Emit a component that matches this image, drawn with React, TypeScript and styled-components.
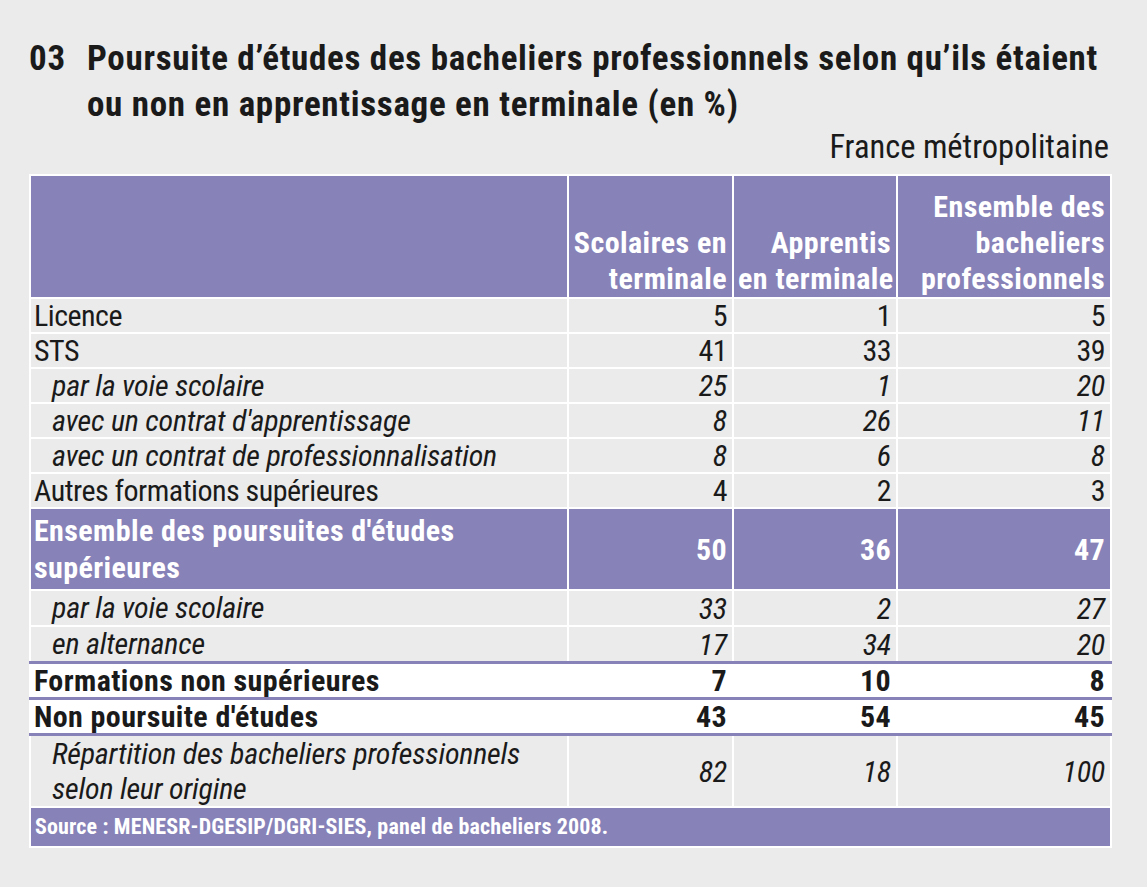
import React from "react";
import styled, { createGlobalStyle } from "styled-components";

const Global = createGlobalStyle`
  html, body { margin: 0; padding: 0; background: #ebebeb; }
  body { font-family: "Roboto Condensed", "Liberation Sans", sans-serif; color: #1a1a1a; }
`;

const PURPLE = "#8782b8";
const GREY = "#ebebeb";

const Page = styled.div`
  width: 1147px;
  height: 887px;
  padding: 36px 0 0 29px;
  box-sizing: border-box;
`;

const TitleRow = styled.div`
  display: flex;
  font-weight: bold;
  font-size: 35px;
  letter-spacing: 0.7px;
  line-height: 46px;
  color: #1a1a1a;
`;

const TitleNum = styled.div`
  width: 58px;
  flex: none;
`;

const TitleText = styled.div`
  flex: 1;
  white-space: nowrap;
`;

const Zone = styled.div`
  width: 1080px;
  text-align: right;
  font-size: 32.5px;
  line-height: 38px;
  margin-bottom: 8px;
`;

const Table = styled.table`
  width: 1081px;
  border-collapse: collapse;
  table-layout: fixed;
  border: 2px solid #fff;
  font-size: 30px;
`;

const Col = styled.col<{ $w: number }>`
  width: ${(p) => p.$w}px;
`;

const HeadCell = styled.th`
  background: ${PURPLE};
  color: #fff;
  font-weight: bold;
  letter-spacing: 0.45px;
  text-align: right;
  vertical-align: bottom;
  line-height: 36px;
  height: 121px;
  padding: 0 5px 0 4px;
  border: 2px solid #fff;
  white-space: nowrap;
`;

type Kind = "normal" | "sub" | "total" | "bold" | "note";

const isBold = (k: Kind) => k === "total" || k === "bold";
const isItalic = (k: Kind) => k === "sub" || k === "note";

const Row = styled.tr<{ $kind: Kind; $lineTop?: boolean; $lineBottom?: boolean }>`
  background: ${(p) => (p.$kind === "total" ? PURPLE : p.$kind === "bold" ? "#fff" : GREY)};
  color: ${(p) => (p.$kind === "total" ? "#fff" : "#1a1a1a")};
  font-weight: ${(p) => (isBold(p.$kind) ? "bold" : "normal")};
  font-style: ${(p) => (isItalic(p.$kind) ? "italic" : "normal")};
  letter-spacing: ${(p) => (isBold(p.$kind) ? "0.4px" : isItalic(p.$kind) ? "-0.2px" : "-0.5px")};
  & > td {
    border-left: 2px solid #fff;
    border-right: 2px solid #fff;
    border-top: ${(p) => (p.$lineTop ? `3px solid ${PURPLE}` : "2px solid #fff")};
    border-bottom: ${(p) => (p.$lineBottom ? `3px solid ${PURPLE}` : "2px solid #fff")};
  }
`;

const Label = styled.td<{ $indent?: boolean; $lh: number; $pad: number }>`
  padding: ${(p) => p.$pad}px 6px ${(p) => p.$pad}px ${(p) => (p.$indent ? 21 : 3)}px;
  line-height: ${(p) => p.$lh}px;
  text-align: left;
  vertical-align: middle;
  white-space: nowrap;
`;

const Num = styled.td`
  text-align: right;
  padding: 0 5px 0 4px;
  line-height: 33px;
  vertical-align: middle;
`;

const SourceRow = styled.tr`
  background: ${PURPLE};
  color: #fff;
  font-weight: bold;
  font-size: 22px;
  letter-spacing: 0.15px;
  & > td {
    border: 2px solid #fff;
    padding: 0 4px;
    height: 38px;
    line-height: 38px;
  }
`;

type DataRow = {
  label: React.ReactNode;
  kind: Kind;
  values: string[];
  lh?: number;
  pad?: number;
  lineTop?: boolean;
  lineBottom?: boolean;
};

const rows: DataRow[] = [
  { label: "Licence", kind: "normal", values: ["5", "1", "5"] },
  { label: "STS", kind: "normal", values: ["41", "33", "39"] },
  { label: "par la voie scolaire", kind: "sub", values: ["25", "1", "20"] },
  { label: "avec un contrat d'apprentissage", kind: "sub", values: ["8", "26", "11"] },
  { label: "avec un contrat de professionnalisation", kind: "sub", values: ["8", "6", "8"] },
  { label: "Autres formations supérieures", kind: "normal", values: ["4", "2", "3"] },
  {
    label: (
      <>
        Ensemble des poursuites d'études
        <br />
        supérieures
      </>
    ),
    kind: "total",
    values: ["50", "36", "47"],
    lh: 37,
    pad: 3,
  },
  { label: "par la voie scolaire", kind: "sub", values: ["33", "2", "27"], lh: 34 },
  { label: "en alternance", kind: "sub", values: ["17", "34", "20"], lh: 34 },
  { label: "Formations non supérieures", kind: "bold", values: ["7", "10", "8"], lineTop: true, lineBottom: true },
  { label: "Non poursuite d'études", kind: "bold", values: ["43", "54", "45"], lh: 31, lineTop: true, lineBottom: true },
  {
    label: (
      <>
        Répartition des bacheliers professionnels
        <br />
        selon leur origine
      </>
    ),
    kind: "note",
    values: ["82", "18", "100"],
    lh: 35,
    lineTop: true,
  },
];

export default function App() {
  return (
    <Page>
      <Global />
      <TitleRow>
        <TitleNum>03</TitleNum>
        <TitleText>
          Poursuite d’études des bacheliers professionnels selon qu’ils étaient
          <br />
          ou non en apprentissage en terminale (en %)
        </TitleText>
      </TitleRow>
      <Zone>France métropolitaine</Zone>
      <Table>
        <colgroup>
          <Col $w={538} />
          <Col $w={165} />
          <Col $w={164} />
          <Col $w={214} />
        </colgroup>
        <thead>
          <tr>
            <HeadCell />
            <HeadCell>
              Scolaires en
              <br />
              terminale
            </HeadCell>
            <HeadCell>
              Apprentis
              <br />
              en terminale
            </HeadCell>
            <HeadCell>
              Ensemble des
              <br />
              bacheliers
              <br />
              professionnels
            </HeadCell>
          </tr>
        </thead>
        <tbody>
          {rows.map((r, i) => (
            <Row key={i} $kind={r.kind} $lineTop={r.lineTop} $lineBottom={r.lineBottom}>
              <Label $indent={isItalic(r.kind)} $lh={r.lh ?? 33} $pad={r.pad ?? 0}>
                {r.label}
              </Label>
              {r.values.map((v, j) => (
                <Num key={j}>{v}</Num>
              ))}
            </Row>
          ))}
          <SourceRow>
            <td colSpan={4}>Source : MENESR-DGESIP/DGRI-SIES, panel de bacheliers 2008.</td>
          </SourceRow>
        </tbody>
      </Table>
    </Page>
  );
}
